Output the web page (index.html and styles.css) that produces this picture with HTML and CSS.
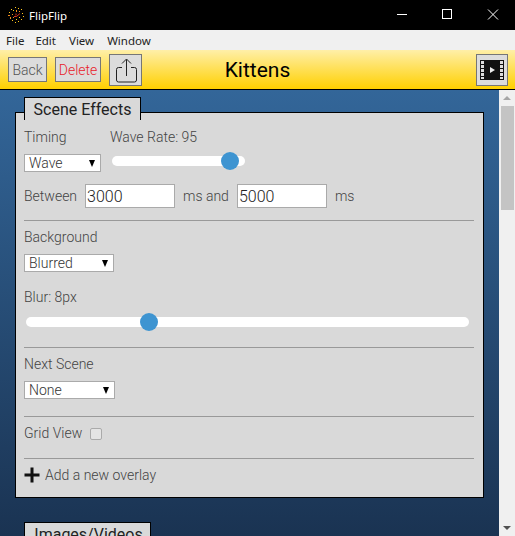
FILE: index.html
```html
<!DOCTYPE html>
<html>
<head lang="en">
    <meta charset="UTF-8">
    <title>FlipFlip</title>
    <link rel="stylesheet" href="styles.css">
</head>
<body>
<div class="titlebar">
    <svg class="app-icon" width="16" height="16" viewBox="0 0 16 16">
        <g fill="#ffc61a">
            <rect x="7" y="0" width="1" height="1"/><rect x="10" y="1" width="1" height="1"/><rect x="3" y="2" width="1" height="1"/>
            <rect x="5" y="3" width="1" height="1"/><rect x="13" y="2" width="1" height="1"/><rect x="14" y="6" width="1" height="1"/>
            <rect x="1" y="5" width="1" height="1"/><rect x="15" y="9" width="1" height="1"/><rect x="13" y="12" width="1" height="1"/>
            <rect x="10" y="14" width="1" height="1"/><rect x="7" y="15" width="1" height="1"/><rect x="8" y="12" width="1" height="1"/>
            <rect x="4" y="13" width="1" height="1"/><rect x="11" y="10" width="1" height="1"/>
        </g>
        <g fill="#f08a1c">
            <rect x="0" y="8" width="2" height="1"/><rect x="2" y="10" width="1" height="2"/><rect x="4" y="7" width="1" height="1"/>
            <rect x="8" y="3" width="1" height="2"/><rect x="11" y="4" width="1" height="1"/><rect x="5" y="10" width="1" height="1"/>
        </g>
        <path d="M6 9.5H8.5L12 6.5M8 6.5V8.5" stroke="#d8321e" stroke-width="1" fill="none"/>
    </svg>
    <span class="app-name">FlipFlip</span>
    <div class="win-controls">
        <svg width="46" height="30" viewBox="0 0 46 30"><path d="M19 14.5H29" stroke="#fff"/></svg>
        <svg width="46" height="30" viewBox="0 0 46 30"><rect x="18.5" y="9.5" width="9" height="9" fill="none" stroke="#fff"/></svg>
        <svg width="46" height="30" viewBox="0 0 46 30"><path d="M18 9.5L28 19.5M28 9.5L18 19.5" stroke="#fff"/></svg>
    </div>
</div>
<ul class="menubar">
    <li>File</li>
    <li>Edit</li>
    <li>View</li>
    <li>Window</li>
</ul>
<div class="header">
    <div class="header-left">
        <button class="btn btn-back">Back</button>
        <button class="btn btn-delete">Delete</button>
        <button class="btn-icon">
            <svg width="26" height="28" viewBox="0 0 26 28" fill="none" stroke="#222" stroke-width="1">
                <path d="M9 11.5H5.5Q3.5 11.5 3.5 13.5V24Q3.5 26 5.5 26H21.5Q23.5 26 23.5 24V13.5Q23.5 11.5 21.5 11.5H18"/>
                <path d="M13.5 20V3.5M9 7.5L13.5 3L18 7.5"/>
            </svg>
        </button>
    </div>
    <h1 class="title">Kittens</h1>
    <button class="btn-icon btn-film">
        <svg width="24" height="20" viewBox="0 0 24 20">
            <rect x="0" y="0" width="24" height="20" fill="#111"/>
            <g fill="#ddd">
                <rect x="1" y="1" width="3" height="3"/><rect x="1" y="5" width="3" height="3"/><rect x="1" y="9" width="3" height="3"/><rect x="1" y="13" width="3" height="3"/><rect x="1" y="17" width="3" height="2"/>
                <rect x="20" y="1" width="3" height="3"/><rect x="20" y="5" width="3" height="3"/><rect x="20" y="9" width="3" height="3"/><rect x="20" y="13" width="3" height="3"/><rect x="20" y="17" width="3" height="2"/>
            </g>
            <path d="M10 7L15 10L10 13Z" fill="#eee"/>
        </svg>
    </button>
</div>
<div class="main">
    <div class="content">
        <div class="tab">Scene Effects</div>
        <div class="panel">
            <div class="section">
                <div class="timing-row">
                    <div class="col col-timing">
                        <div class="label">Timing</div>
                        <div class="select select-wave"><span>Wave</span><i></i></div>
                    </div>
                    <div class="col">
                        <div class="label">Wave Rate: 95</div>
                        <div class="slider slider-wave"><b class="thumb thumb-wave"></b></div>
                    </div>
                </div>
                <div class="between-row">
                    <span class="label">Between</span>
                    <input class="num" type="text" value="3000">
                    <span class="label">ms and</span>
                    <input class="num" type="text" value="5000">
                    <span class="label">ms</span>
                </div>
            </div>
            <div class="section">
                <div class="label">Background</div>
                <div class="select select-bg"><span>Blurred</span><i></i></div>
                <div class="label label-blur">Blur: 8px</div>
                <div class="slider slider-blur"><b class="thumb thumb-blur"></b></div>
            </div>
            <div class="section">
                <div class="label">Next Scene</div>
                <div class="select select-next"><span>None</span><i></i></div>
            </div>
            <div class="section section-grid">
                <span class="label">Grid View</span>
                <span class="check"></span>
            </div>
            <div class="add-row">
                <svg width="16" height="16" viewBox="0 0 16 16"><path d="M8 0.5V15.5M0.5 8H15.5" stroke="#111" stroke-width="3"/></svg>
                <span class="label">Add a new overlay</span>
            </div>
        </div>
        <div class="tab tab-next">Images/Videos</div>
    </div>
    <div class="scrollbar">
        <i class="arrow-up"></i>
        <div class="scroll-track"><div class="scroll-thumb"></div></div>
        <i class="arrow-down"></i>
    </div>
</div>
</body>
</html>
```

FILE: styles.css
```css
* {
    margin: 0;
    padding: 0;
    box-sizing: border-box;
}

html, body {
    height: 100%;
    overflow: hidden;
}

body {
    display: flex;
    flex-direction: column;
    font-family: Roboto, "Liberation Sans", sans-serif;
    font-size: 14px;
    font-weight: 300;
    color: #444;
}

ul {
    list-style: none;
}

.titlebar {
    height: 30px;
    flex: none;
    background: #000;
    color: #fff;
    display: flex;
    align-items: center;
    padding-left: 8px;
    font-family: "Noto Sans", sans-serif;
    font-size: 11.5px;
    font-weight: 400;
}

.app-name {
    margin-left: 5px;
}

.win-controls {
    margin-left: auto;
    display: flex;
    margin-right: -1px;
}

.win-controls svg {
    display: block;
}

.menubar {
    height: 20px;
    flex: none;
    background: #f0f0f0;
    color: #222;
    display: flex;
    align-items: center;
    gap: 13px;
    padding-left: 6px;
    font-family: "Noto Sans", sans-serif;
    font-size: 11.5px;
    font-weight: 400;
}

.menubar li:first-child {
    margin-right: -2px;
}

.header {
    height: 40px;
    flex: none;
    background: linear-gradient(#ffefa8, #ffd000);
    border-bottom: 1px solid #000;
    display: flex;
    align-items: center;
    justify-content: space-between;
    padding: 0 7px 0 8px;
    position: relative;
}

.header-left {
    display: flex;
    align-items: center;
    gap: 8px;
}

.title {
    position: absolute;
    left: 0;
    right: 0;
    text-align: center;
    font-size: 21px;
    font-weight: 400;
    color: #000;
    pointer-events: none;
}

.btn {
    height: 25px;
    background: #dcdcdc;
    border: 1px solid #767676;
    font-family: Roboto, sans-serif;
    font-size: 14px;
    font-weight: 300;
    color: #555;
}

.btn-back {
    width: 39px;
}

.btn-delete {
    width: 46px;
    color: #e8202a;
}

.btn-icon {
    width: 33px;
    height: 32px;
    display: flex;
    align-items: center;
    justify-content: center;
    background: #dcdcdc;
    border: 1px solid #767676;
}

.btn-film {
    width: 32px;
}

.main {
    flex: 1;
    display: flex;
    min-height: 0;
}

.content {
    flex: 1;
    overflow: hidden;
    padding: 7px 15px 0;
    background: linear-gradient(#336699, #1a3352);
}

.tab {
    width: 117px;
    height: 23px;
    margin-left: 9px;
    margin-bottom: -8px;
    position: relative;
    z-index: 1;
    background: #d9d9d9;
    border: 1px solid #000;
    border-bottom: none;
    font-size: 16px;
    font-weight: 400;
    line-height: 23px;
    color: #222;
    text-align: center;
}

.tab-next {
    width: 127px;
    margin-top: 24px;
    padding-left: 2px;
}

.panel {
    width: 469px;
    height: 386px;
    background: #d9d9d9;
    border: 1px solid #000;
    padding: 16px 9px 0 8px;
}

.section {
    border-bottom: 1px solid #999;
}

.label {
    line-height: 16px;
}

.timing-row {
    display: flex;
    gap: 9px;
}

.col-timing {
    width: 77px;
}

.select {
    height: 18px;
    margin-top: 9px;
    background: #fff;
    border: 1px solid #aaa;
    color: #333;
    display: flex;
    align-items: center;
    justify-content: space-between;
    padding: 0 5px 0 4px;
    line-height: 16px;
}

.select i {
    width: 0;
    height: 0;
    border-left: 3.5px solid transparent;
    border-right: 3.5px solid transparent;
    border-top: 7px solid #000;
}

.select-bg {
    width: 90px;
}

.select-next {
    width: 91px;
}

.slider {
    height: 10px;
    background: #fff;
    border-radius: 5px;
    position: relative;
}

.slider-wave {
    width: 133px;
    margin: 11px 0 0 2px;
}

.slider-blur {
    width: 443px;
    margin: 12px 0 0 2px;
}

.thumb {
    position: absolute;
    top: -4px;
    width: 18px;
    height: 18px;
    border-radius: 50%;
    background: #3e94d1;
}

.thumb-wave {
    left: 109px;
}

.thumb-blur {
    left: 114px;
}

.between-row {
    display: flex;
    align-items: center;
    margin-top: 12px;
    padding-bottom: 12px;
}

.between-row .label:first-child {
    width: 61px;
}

.between-row .num + .label {
    margin: 0 8px;
}

.num {
    width: 90px;
    height: 24px;
    border: 1px solid #aaa;
    background: #fff;
    padding: 0 1px;
    font-family: Roboto, sans-serif;
    font-size: 16px;
    font-weight: 300;
    color: #222;
}

.section + .section {
    padding-top: 8px;
}

.section:nth-child(2) {
    height: 127px;
}

.section:nth-child(3) {
    height: 69px;
}

.label-blur {
    margin-top: 17px;
}

.section-grid {
    height: 42px;
    display: flex;
    align-items: center;
    gap: 8px;
    padding: 0 0 9px !important;
}

.check {
    width: 12px;
    height: 12px;
    border: 1px solid #aaa;
    border-radius: 2px;
    background: #e4e4e4;
    margin-top: 1px;
}

.add-row {
    display: flex;
    align-items: center;
    gap: 5px;
    margin-top: 8px;
}

.scrollbar {
    width: 16px;
    flex: none;
    background: #f0f0f0;
    display: flex;
    flex-direction: column;
    align-items: center;
}

.scroll-track {
    flex: 1;
    width: 100%;
    padding: 0 1px 0 2px;
}

.scroll-thumb {
    height: 104px;
    background: #c4c4c4;
}

.arrow-up, .arrow-down {
    flex: none;
    width: 0;
    height: 0;
    border-left: 4px solid transparent;
    border-right: 4px solid transparent;
}

.arrow-up {
    margin: 6px 0 6px;
    border-bottom: 4px solid #a6a6a6;
}

.arrow-down {
    margin: 6px 0 6px;
    border-top: 4px solid #505050;
}
```
